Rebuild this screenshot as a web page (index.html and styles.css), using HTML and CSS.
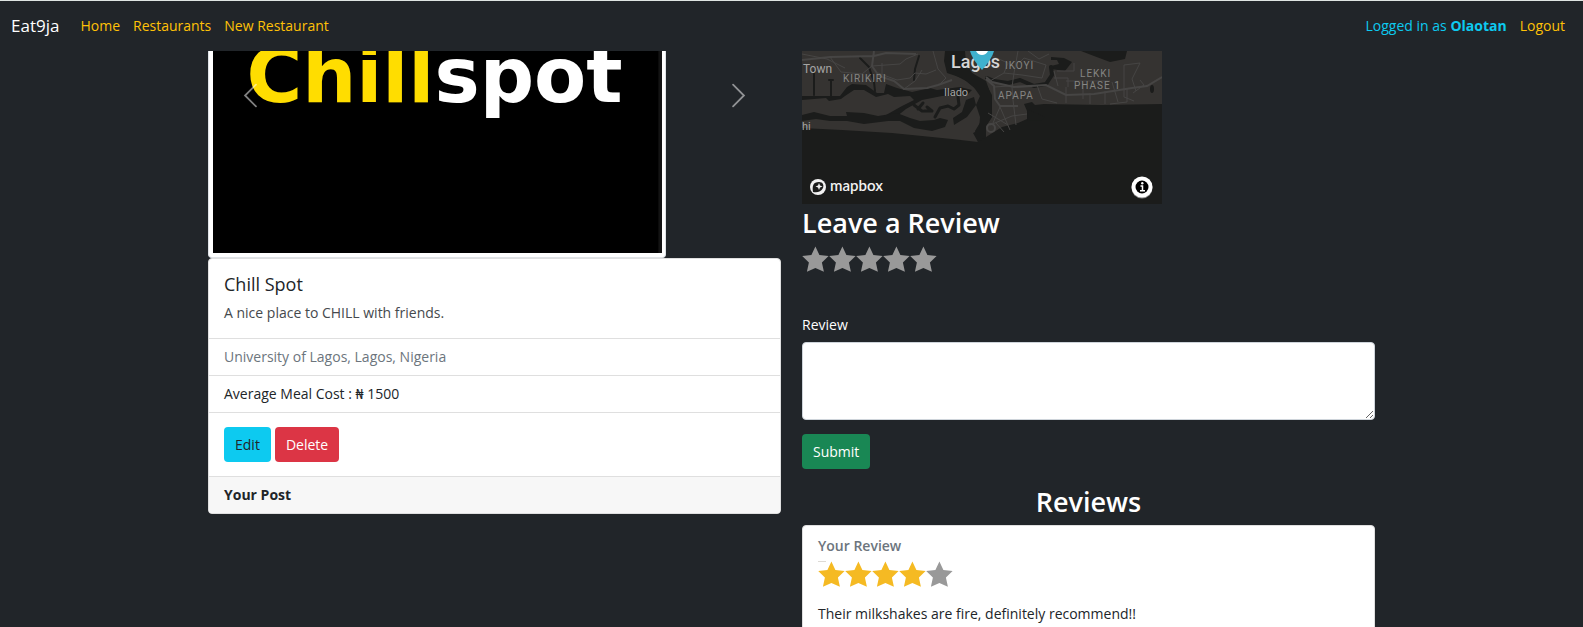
FILE: index.html
```html
<!DOCTYPE html>
<html lang="en">
<head>
<meta charset="utf-8">
<meta name="viewport" content="width=device-width, initial-scale=1">
<title>Chill Spot</title>
<link rel="stylesheet" href="styles.css">
</head>
<body>
<nav class="navbar">
  <a class="brand" href="#">Eat9ja</a>
  <a class="nav-link" href="#">Home</a>
  <a class="nav-link" href="#">Restaurants</a>
  <a class="nav-link" href="#">New Restaurant</a>
  <span class="user">Logged in as <strong>Olaotan</strong></span>
  <a class="nav-link" href="#">Logout</a>
</nav>
<svg class="defs" aria-hidden="true">
  <symbol id="star" viewBox="0 0 27 27"><path d="M13.4 0.4 L17.4 8.900 L26.600 10.100 L19.900 16.600 L21.900 25.800 L13.400 22 L4.900 25.800 L6.900 16.600 L0.200 10.100 L9.400 8.900 Z"/></symbol>
</svg>
<main class="container">
  <section class="column">
    <div class="carousel">
      <div class="thumbnail">
        <svg class="logo" viewBox="0 0 450 202" preserveAspectRatio="xMaxYMax slice" role="img" aria-label="Chillspot">
          <rect width="450" height="202" fill="#000"/>
          <rect x="446" width="4" height="202" fill="#131313"/>
          <text x="34" y="51" class="logo-text"><tspan fill="#ffdd00">Chill</tspan><tspan fill="#fff">spot</tspan></text>
        </svg>
      </div>
      <button class="arrow arrow-prev" type="button" aria-label="Previous">
        <svg viewBox="0 0 16 16"><path d="M11 2 L5 8 L11 14"/></svg>
      </button>
      <button class="arrow arrow-next" type="button" aria-label="Next">
        <svg viewBox="0 0 16 16"><path d="M5 2 L11 8 L5 14"/></svg>
      </button>
    </div>
    <article class="card">
      <div class="card-body">
        <h1 class="card-title">Chill Spot</h1>
        <p class="card-text">A nice place to CHILL with friends.</p>
      </div>
      <ul class="list">
        <li class="list-item muted">University of Lagos, Lagos, Nigeria</li>
        <li class="list-item">Average Meal Cost : ₦ 1500</li>
      </ul>
      <div class="card-actions">
        <a class="btn btn-info" href="#">Edit</a>
        <button class="btn btn-danger" type="button">Delete</button>
      </div>
      <div class="card-footer">Your Post</div>
    </article>
  </section>
  <section class="column">
    <svg class="map" viewBox="0 0 360 153" role="img" aria-label="Map of Lagos">
      <rect width="360" height="153" fill="#1b1c1b"/>
      <path fill="#353331" d="M0 0H360V53L300 54L242 53L233 54L230 51L222 53L225 60L225 68L216 72L200 76L184 86L184 75L190 66L190 44L184 33L170 22L150 12L143 0H0Z"/>
      <path fill="#353331" d="M0 0H143L145 20L164 30L176 40L181 52L179 70L173 80L176 91L150 88L90 82L40 79L0 77Z"/>
      <g fill="#1b1c1b">
        <path d="M143 0H163L164 12L170 22L184 30L189 44L190 66L184 75L184 86L176 91L171 82L177 79L178 66L174 54L178 45L171 35L160 27L145 22L142 10Z"/>
        <path d="M0 45H38L45 36L50 33L64 34L75 42H82L84 33L95 37L110 41L128 37L135 39L158 36L170 39L165 44L140 45L120 49L104 58L94 66L84 64L100 55L112 49L108 45L92 46L86 43L74 46L62 39L52 39L43 45L39 48L27 50L24 47L0 49Z"/>
        <path d="M0 64L12 61L28 65H45L44 61L62 62L76 65L95 62L108 67L118 70L132 69L138 67L146 69L143 76L130 80L112 77L98 70L86 70L62 73L45 70L28 70L14 68L0 70Z"/>
        <path d="M172 46L164 49L160 61L151 67L152 74L165 66L174 54Z"/>
        <path d="M249 6L262 7L270 11L263 20L249 18V15L257 13L255 9H249Z"/>
        <path d="M279 0H325L323 8L308 11L292 5Z"/>
        <path d="M225 58L243 66L240 69L226 70Z"/>
        <ellipse cx="350" cy="38" rx="2" ry="4"/>
      </g>
      <g fill="none" stroke="#1b1c1b" stroke-linejoin="round" stroke-linecap="round">
        <path stroke-width="3" d="M112 54L120 60M116 58L121 52M125 56L130 60H122M133 66L138 57L146 55L152 58L157 54L156 46"/>
        <path stroke-width="4" d="M185 27L192 30L206 32L218 29L232 35L244 33L250 24L249 16"/>
        <path stroke-width="2" d="M12 20V44M27 29H31M29 30V46M58 7L67 16L72 31L73 40M117 5L113 18L112 29"/>
      </g>
      <g fill="none" stroke="#464544" stroke-width="1">
        <path stroke-width="2" d="M0 9L28 6L72 5L84 2L114 3M72 0L70 15L77 25L92 30L102 38L125 37L136 34L150 29"/>
        <path stroke-width="2" d="M184 26L190 31L212 36L244 34L264 44L292 43L330 37L345 35L360 26"/>
        <path stroke-width="2" d="M184 28L192 35L193 48L198 55H216"/>
        <path d="M0 3L25 8L43 17M28 6L39 21L60 23L70 15M70 15L98 13L104 8L116 3M76 22L95 29L108 27L113 22L124 23L134 19M102 38L113 30L120 19M131 0L136 18L144 27L138 33M80 12V27M216 0L212 22L210 36L211 49L214 74M186 62L206 74M188 74L210 65L225 63M198 56L208 79M198 56L191 72M194 72L202 81M192 36L207 35M188 30L202 22L206 12L190 5M202 22L220 24L240 27L244 14L222 7L217 12M226 0L237 8L247 3M235 34L240 48L255 52M252 20L256 35M255 20H272L272 12M252 27H266V36M264 36V52M281 31V48M264 30H308M288 42V53M303 40V53M310 31L316 51M322 14V46M322 14L338 12L330 28L334 40M322 46L332 50M338 29L342 34L331 42M308 53L325 51V38"/>
        <circle cx="189" cy="77" r="4" stroke-width="2"/>
      </g>
      <g class="map-label">
        <text x="1" y="22" class="town">Town</text>
        <text x="0" y="79" class="place">hi</text>
        <text x="142" y="45" class="place">Ilado</text>
        <text x="149" y="17" class="city">Lagos</text>
        <text x="41" y="31" class="area">KIRIKIRI</text>
        <text x="203" y="18" class="area">IKOYI</text>
        <text x="196" y="48" class="area">APAPA</text>
        <text x="278" y="26" class="area">LEKKI</text>
        <text x="272" y="38" class="area">PHASE 1</text>
      </g>
      <path fill="#3fb1ce" d="M168 0H192Q190 8 180 19Q170 8 168 0Z"/>
      <path fill="#fff" d="M174 0H186Q184 4 180 4Q176 4 174 0Z"/>
      <g>
        <circle cx="16" cy="136" r="8" fill="#f2f2f2"/>
        <path d="M11 141C10 135 11 131 17 131C21 131 22 134 21 137C19 141 15 142 11 141Z" fill="#1b1c1b"/>
        <path d="M17 132L18 134.500L20.500 135.500L18 136.500L17 139L16 136.500L13.500 135.500L16 134.500Z" fill="#f2f2f2"/>
        <text x="28" y="140" class="mapbox">mapbox</text>
      </g>
      <circle cx="340" cy="137" r="10.500" fill="#8b8b8b"/>
      <circle cx="340" cy="136" r="10.500" fill="#fff"/>
      <circle cx="340" cy="136" r="6.500" fill="#000"/>
      <path d="M338.500 135H340.500V139.500M338 139.800H343" stroke="#fff" stroke-width="1.500" fill="none"/>
      <circle cx="340.300" cy="132.300" r="1.200" fill="#fff"/>
    </svg>
    <h2 class="heading">Leave a Review</h2>
    <form class="review-form">
      <fieldset class="stars rating" aria-label="Rating">
        <label class="star"><input type="radio" name="rating" value="1" aria-label="1 star"><svg><use href="#star"/></svg></label>
        <label class="star"><input type="radio" name="rating" value="2" aria-label="2 stars"><svg><use href="#star"/></svg></label>
        <label class="star"><input type="radio" name="rating" value="3" aria-label="3 stars"><svg><use href="#star"/></svg></label>
        <label class="star"><input type="radio" name="rating" value="4" aria-label="4 stars"><svg><use href="#star"/></svg></label>
        <label class="star"><input type="radio" name="rating" value="5" aria-label="5 stars"><svg><use href="#star"/></svg></label>
      </fieldset>
      <label class="form-label" for="review">Review</label>
      <textarea class="textarea" id="review" rows="3"></textarea>
      <button class="btn btn-success" type="submit">Submit</button>
    </form>
    <h2 class="heading centered">Reviews</h2>
    <article class="card review">
      <h3 class="review-author">Your Review</h3>
      <div class="stars rated" role="img" aria-label="Rated 4 out of 5">
        <svg class="star gold"><use href="#star"/></svg>
        <svg class="star gold"><use href="#star"/></svg>
        <svg class="star gold"><use href="#star"/></svg>
        <svg class="star gold"><use href="#star"/></svg>
        <svg class="star"><use href="#star"/></svg>
      </div>
      <p class="review-text">Their milkshakes are fire, definitely recommend!!</p>
    </article>
  </section>
</main>
</body>
</html>
```
FILE: styles.css
```css
* { box-sizing: border-box; }
html { background: #212529; overflow: hidden; }
body {
  margin: 0;
  color: #212529;
  background: #212529;
  font: 14px/22px "Open Sans", "Noto Sans", sans-serif;
}
h1, h2, h3, p, ul, fieldset { margin: 0; padding: 0; border: 0; }
.defs { display: none; }

.navbar {
  display: flex;
  align-items: center;
  gap: 13px;
  height: 51px;
  padding: 0 18px 0 11px;
  border-top: 1px solid #dfe5e2;
  background: #212529;
}
.navbar a { text-decoration: none; }
.navbar .brand { margin-right: 8px; color: #fff; font-size: 17px; }
.nav-link { color: #ffc107; }
.user { margin-left: auto; color: #0dcaf0; }

.container {
  display: grid;
  grid-template-columns: 1fr 1fr;
  align-items: start;
  gap: 21px;
  max-width: 1167px;
  margin: 0 auto;
}
.column { min-width: 0; }

.carousel { position: relative; }
.thumbnail {
  width: 80%;
  padding: 0 3px 4px 4px;
  border: 1px solid #dee2e6;
  border-top: 0;
  border-radius: 0 0 4px 4px;
  background: #fff;
}
.logo { display: block; width: 100%; height: 202px; }
.logo-text { font: bold 76px "DejaVu Sans", sans-serif; }
.arrow {
  position: absolute;
  top: 0;
  display: flex;
  align-items: center;
  justify-content: center;
  width: 15%;
  height: 89px;
  padding: 0;
  border: 0;
  background: none;
  opacity: 0.5;
}
.arrow-prev { left: 0; }
.arrow-next { right: 0; }
.arrow svg { width: 29px; height: 29px; fill: none; stroke: #fff; stroke-width: 1; stroke-linecap: round; }

.card {
  overflow: hidden;
  border: 1px solid #dfdfdf;
  border-radius: 4px;
  background: #fff;
}
.card-body { padding: 14px 15px; }
.card-title { margin-bottom: 7px; font-size: 18px; font-weight: 500; line-height: 22px; }
.card-text { color: #45494d; }
.list { list-style: none; }
.list-item { padding: 7px 15px; border-top: 1px solid #dfdfdf; }
.muted { color: #6c757d; }
.card-actions { display: flex; gap: 4px; padding: 14px 15px; border-top: 1px solid #dfdfdf; }
.card-footer { padding: 7px 15px; border-top: 1px solid #dfdfdf; background: #f7f7f7; font-weight: 700; }

.btn {
  display: inline-block;
  padding: 6px 10px;
  border: 1px solid transparent;
  border-radius: 4px;
  font: inherit;
  line-height: 21px;
  text-decoration: none;
}
.btn-info { background: #0dcaf0; color: #212529; }
.btn-danger { background: #dc3545; color: #fff; font-weight: 500; }
.btn-success { background: #198754; color: #fff; }

.map { display: block; width: 360px; max-width: 100%; }
.map-label { fill: #a5a5a4; font-family: Roboto, sans-serif; }
.town { font-size: 12px; }
.place { font-size: 11px; }
.city { font-size: 18px; font-weight: 500; fill: #d6d6d6; }
.area { font-size: 10px; letter-spacing: 1px; fill: #858583; }
.mapbox { font: 600 15px Lato, sans-serif; fill: #f2f2f2; }

.heading { margin-bottom: 6px; padding-top: 1px; color: #fff; font-size: 27px; font-weight: 600; line-height: 35px; }
.centered { text-align: center; }
.stars { display: flex; height: 27px; }
.star { display: block; position: relative; width: 27px; height: 27px; fill: #999; }
.star svg { display: block; width: 27px; height: 27px; }
.star input { position: absolute; inset: 0; margin: 0; opacity: 0; }
.gold { fill: #f5ba23; }
.rated { position: relative; }
.rated::before {
  content: "";
  position: absolute;
  top: 0;
  left: 0;
  width: 8px;
  border-top: 1px solid #dddad5;
}
.rating { margin-bottom: 41px; }
.review-form { margin-bottom: 14px; }
.form-label { display: block; margin-bottom: 6px; color: #fff; }
.textarea {
  display: block;
  width: 100%;
  height: 78px;
  margin-bottom: 14px;
  padding: 5px 11px;
  border: 1px solid #ced4da;
  border-radius: 4px;
  background: #fff;
  font: inherit;
  resize: vertical;
}
.review { padding: 9px 15px 14px; }
.review-author { margin-bottom: 4px; color: #6c757d; font-size: 14px; font-weight: 600; line-height: 22px; }
.review-text { margin-top: 15px; }
```
